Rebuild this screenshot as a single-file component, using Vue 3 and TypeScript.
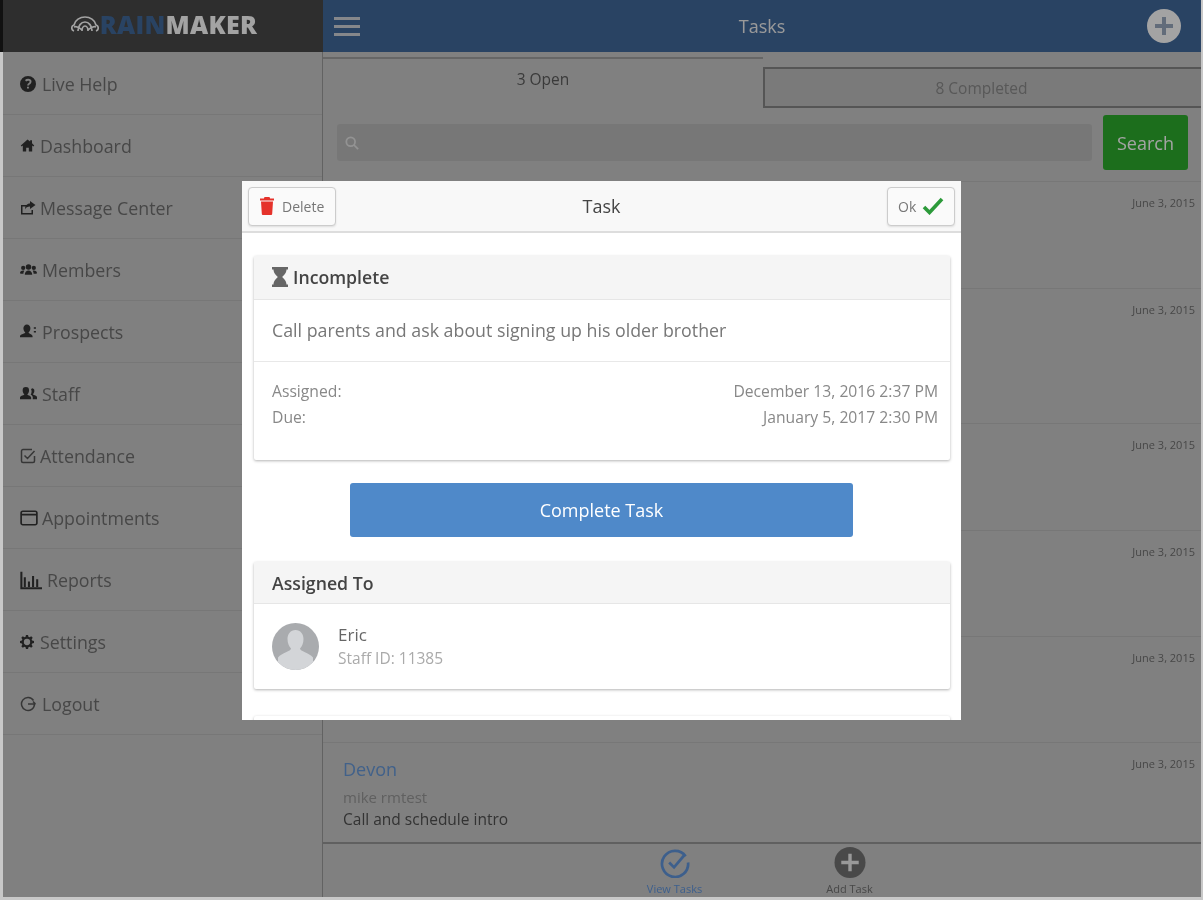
<script setup lang="ts">
interface NavItem { label: string; w: number; size?: number; path: string; stroke?: boolean; soft?: boolean }
const nav: NavItem[] = [
  { label: 'Live Help', w: 22, path: 'M8 0a8 8 0 1 0 0 16A8 8 0 0 0 8 0zm.9 12.6H7v-1.900h1.900zm1.700-4.900c-.8.6-1.500 1-1.600 1.900H7.200c0-1.500.8-2.200 1.500-2.700.5-.4.9-.7.9-1.200 0-.6-.6-1-1.400-1-.8 0-1.500.3-2.100.8L5 3.900c.8-.7 1.900-1.100 3.200-1.100 1.900 0 3.300 1 3.300 2.700 0 1-.4 1.600-.9 2.200z' },
  { label: 'Dashboard', w: 20, size: 15, path: 'M8 1.500 0.800 8l1 1.100L3 8v6.500h3.600v-4h2.800v4H13V8l1.200 1.100 1-1.100L12.800 5.500V2.500h-2v1.200z' },
  { label: 'Message Center', w: 20, path: 'M1 5h6v1.500H2.500v6.500h9v-3H13v4.500H1zM10 1l5.500 4L10 9V6.500c-2.500 0-4 .8-5 3 0-3.500 1.800-6 5-6z' },
  { label: 'Members', w: 22, size: 17, path: 'M8 3a2.600 2.600 0 1 1 0 5.200A2.600 2.600 0 0 1 8 3zM3 4.500a2 2 0 1 1 0 4 2 2 0 0 1 0-4zm10 0a2 2 0 1 1 0 4 2 2 0 0 1 0-4zM4.500 13c0-2.500 1.500-4 3.500-4s3.500 1.500 3.500 4zM0 11.500c0-1.500 1.200-2.500 3-2.500.4 0 .8.100 1 .2C3.400 10 3.200 11 3.200 12H0.800zM16 11.500c0-1.500-1.200-2.500-3-2.500-.4 0-.8.100-1 .2.600.8.800 1.800.8 2.800h2.400z' },
  { label: 'Prospects', w: 22, size: 17, path: 'M6.500 1.500a3.300 3.300 0 0 1 3.300 3.500c0 1.700-.8 3.200-1.800 4 0 1 3.200 1.400 3.800 3.200v1.300H0v-1.300C.6 10.400 5 10 5 9 4 8.200 3.200 6.700 3.200 5a3.300 3.300 0 0 1 3.300-3.500zM13 4h2v1.500h-2zM13 7.500h2V9h-2z' },
  { label: 'Staff', w: 22, size: 17, path: 'M5.500 2a3 3 0 0 1 3 3.200c0 1.500-.7 2.900-1.600 3.600 0 .9 3.100 1.200 3.600 2.900V13.500H0v-1.800c.5-1.700 4.100-2 4.100-2.900C3.200 8.100 2.500 6.700 2.500 5.200A3 3 0 0 1 5.500 2zM11 3a2.500 2.500 0 0 1 2.500 2.700c0 1.300-.6 2.400-1.300 3 0 .7 3.300 1 3.800 2.500v2.300h-4v-2.300c-.3-1-1.200-1.600-2-2 .6-1 .9-2 .9-3.100 0-.8-.2-1.500-.5-2.100.4-.6 1-1 1.600-1z' },
  { label: 'Attendance', w: 20, stroke: true, soft: true, path: 'M14.500 8v5A1.500 1.500 0 0 1 13 14.500H3A1.500 1.500 0 0 1 1.500 13V3A1.500 1.500 0 0 1 3 1.500h9M4.500 7.500 7.500 10.500 14.500 3' },
  { label: 'Appointments', w: 22, size: 18, stroke: true, path: 'M2.500 2h11A1.500 1.500 0 0 1 15 3.500v9a1.500 1.500 0 0 1-1.500 1.500h-11A1.500 1.500 0 0 1 1 12.500v-9A1.500 1.500 0 0 1 2.500 2zM1 5h14' },
  { label: 'Reports', w: 27, size: 22, stroke: true, path: 'M1 2v12h15M3.500 13V6M6.500 13V9M9.500 13V5M12.500 13V7.500' },
  { label: 'Settings', w: 20, size: 14, path: 'M6.800 0h2.400l.4 2.100 1.400.6 1.800-1.200 1.700 1.700-1.200 1.800.6 1.400 2.100.4v2.400l-2.100.4-.6 1.400 1.200 1.800-1.700 1.700-1.800-1.200-1.400.6-.4 2.100H6.800l-.4-2.100-1.400-.6-1.800 1.200-1.700-1.700 1.200-1.800-.6-1.400L0 9.200V6.800l2.100-.4.6-1.400-1.200-1.800 1.700-1.700 1.800 1.200 1.400-.6zM8 4.400a3.600 3.600 0 1 0 0 7.200 3.600 3.600 0 0 0 0-7.200z' },
  { label: 'Logout', w: 22, stroke: true, soft: true, path: 'M13.500 4.500A6.500 6.500 0 1 0 14.500 8M8 8h7.500M13 5.500 15.500 8' },
]
const dates: string[] = Array.from({ length: 6 }, () => 'June 3, 2015')
</script>

<template>
  <div class="frame">
    <div class="brand">
      <svg class="cloud" viewBox="0 0 28 18" width="28" height="18" fill="none" stroke="#fff" stroke-width="1.700">
        <path d="M3 16c-3-1-3-5 0-6 1-5 6-8 11-8s10 3 11 8c3 1 3 5 0 6" />
        <path d="M7 16c0-5 3-9 7-9s7 4 7 9M11 16c0-2 1-5 3-5s3 3 3 5M3 12c3-1 5 0 8 3M25 12c-3-1-5 0-8 3" />
      </svg>
      <span class="logo"><span class="rain">RAIN</span><span class="maker">MAKER</span></span>
    </div>
    <header class="topbar">
      <div class="burger"><i></i><i></i><i></i></div>
      <h1 class="title">Tasks</h1>
      <svg class="addtop" viewBox="0 0 34 34" width="34" height="34">
        <circle cx="17" cy="17" r="17" fill="#fff" />
        <path d="M17 8v18M8 17h18" stroke="#99aabf" stroke-width="4" />
      </svg>
    </header>

    <aside class="side">
      <div v-for="item in nav" :key="item.label" class="navrow">
        <span class="navicon" :style="{ width: item.w + 'px' }">
          <svg viewBox="0 0 16 16" :width="item.size ?? 16" :height="item.size ?? 16" :fill="item.stroke ? 'none' : '#353535'" :stroke="item.stroke ? (item.soft ? '#555' : '#353535') : 'none'" :stroke-width="item.stroke ? 1.500 : 0">
            <path :d="item.path" />
          </svg>
        </span>
        <span>{{ item.label }}</span>
      </div>
    </aside>

    <main class="main">
      <div class="tabs">
        <div class="tab open">3 Open</div>
        <div class="tab closed">8 Completed</div>
      </div>
      <div class="searchrow">
        <div class="searchbox">
          <svg viewBox="0 0 16 16" width="14" height="14" fill="none" stroke="#e6e6e6" stroke-width="2"><circle cx="6.500" cy="6.500" r="5" /><path d="m10 10 5 5" /></svg>
        </div>
        <button class="searchbtn">Search</button>
      </div>
      <div class="list">
        <div v-for="(d, i) in dates" :key="i" class="row">
          <div class="rowmain">
            <template v-if="i === 5">
              <div class="rname">Devon</div>
              <div class="rsub">mike rmtest</div>
              <div class="rnote">Call and schedule intro</div>
            </template>
          </div>
          <div class="rdate">{{ d }}</div>
        </div>
      </div>
      <nav class="bottombar">
        <div class="btab active">
          <svg viewBox="0 0 32 32" width="32" height="32" fill="none" stroke="#6095dc" stroke-width="2.800">
            <path d="M27 9.500A13.500 13.500 0 1 0 29.500 16" />
            <path d="m10 16 5 5 11-13" />
          </svg>
          <span>View Tasks</span>
        </div>
        <div class="btab">
          <svg viewBox="0 0 32 32" width="32" height="32">
            <circle cx="16" cy="16" r="16" fill="#737373" />
            <path d="M16 7v18M7 16h18" stroke="#f0f0f0" stroke-width="3.500" />
          </svg>
          <span>Add Task</span>
        </div>
      </nav>
    </main>

    <div class="dim"></div>
    <div class="layer">
      <section class="modal">
        <div class="mhead">
          <button class="mbtn del">
            <svg viewBox="0 0 14 18" width="14" height="18" fill="#e5322b">
              <path d="M4.500 0h5l.6 1.500H14v2H0v-2h3.900zM1 4.500h12l-.8 12.200c0 .7-.6 1.300-1.300 1.300H3.100c-.7 0-1.300-.6-1.300-1.300z" />
            </svg>
            <span>Delete</span>
          </button>
          <div class="mtitle">Task</div>
          <button class="mbtn ok">
            <span>Ok</span>
            <svg viewBox="0 0 22 18" width="22" height="18" fill="none" stroke="#2c9a3a" stroke-width="3.600"><path d="m2 10 5.500 5.500L20 2" /></svg>
          </button>
        </div>
        <div class="mbody">
          <div class="card">
            <div class="chead">
              <svg viewBox="0 0 16 20" width="16" height="20" fill="#666"><path d="M0 0h16v2.500h-1.500c0 3.500-2.500 5.500-4.300 7.500 1.800 2 4.300 4 4.300 7.500H16V20H0v-2.500h1.500c0-3.500 2.500-5.500 4.300-7.500C4 8 1.500 6 1.500 2.500H0z" /></svg>
              <span>Incomplete</span>
            </div>
            <div class="desc">Call parents and ask about signing up his older brother</div>
            <div class="meta">
              <div class="metarow"><span>Assigned:</span><span>December 13, 2016 2:37 PM</span></div>
              <div class="metarow"><span>Due:</span><span>January 5, 2017 2:30 PM</span></div>
            </div>
          </div>
          <button class="complete">Complete Task</button>
          <div class="card second">
            <div class="chead plain">Assigned To</div>
            <div class="person">
              <svg class="avatar" viewBox="0 0 47 47" width="47" height="47">
                <defs><clipPath id="avatar-clip"><circle cx="23.500" cy="23.500" r="23.500" /></clipPath></defs>
                <circle cx="23.500" cy="23.500" r="23.500" fill="#a9abae" />
                <path clip-path="url(#avatar-clip)" d="M23.500 7c5 0 8 4 8 9 0 4-1.500 7.500-3.500 9.500 0 3 9 4 13 9v13H6v-13c4-5 13-6 13-9-2-2-3.500-5.500-3.500-9.500 0-5 3-9 8-9z" fill="#d3d5d8" />
              </svg>
              <div>
                <div class="pname">Eric</div>
                <div class="pid">Staff ID: 11385</div>
              </div>
            </div>
          </div>
          <div class="card stub"></div>
        </div>
      </section>
    </div>
  </div>
</template>

<style>
html, body { margin: 0; padding: 0; }
</style>

<style scoped>
.frame {
  position: relative;
  width: 1203px;
  height: 900px;
  box-sizing: border-box;
  padding: 0 2px 3px 3px;
  display: grid;
  grid-template-columns: 320px 1fr;
  grid-template-rows: 52px 1fr;
  background: linear-gradient(#111, #111) no-repeat 0 0 / 3px 52px, #c8c8c8;
  font-family: "Open Sans", "Liberation Sans", sans-serif;
  overflow: hidden;
  filter: blur(0.7px);
}
.brand {
  background: #484848;
  display: flex;
  align-items: center;
  justify-content: center;
  gap: 1px;
  padding: 0 0 5px 2px;
}
.logo { font-size: 25px; font-weight: 800; letter-spacing: 0.3px; }
.rain { color: #40699c; }
.maker { color: #fff; }
.topbar {
  background: #40699c;
  display: flex;
  align-items: center;
  justify-content: space-between;
  padding: 0 20px 0 11px;
  position: relative;
}
.burger { display: flex; flex-direction: column; gap: 5px; width: 26px; }
.burger i { height: 3px; background: #d0d4da; display: block; }
.title {
  position: absolute;
  left: 0;
  right: 0;
  text-align: center;
  margin: 0;
  font-size: 18px;
  font-weight: 500;
  color: #f0f0f0;
  pointer-events: none;
}
.side {
  background: #c8c8c8;
  border-right: 1px solid #999;
  display: flex;
  flex-direction: column;
  padding-top: 1px;
}
.navrow {
  height: 62px;
  box-sizing: border-box;
  display: flex;
  align-items: center;
  padding-left: 17px;
  font-size: 17.8px;
  color: #707070;
  border-bottom: 1px solid #bbb;
}
.navicon { display: inline-flex; flex: none; }
.main {
  background: #c8c8c8;
  display: flex;
  flex-direction: column;
  min-height: 0;
}
.tabs { display: flex; padding-top: 5px; height: 51px; }
.tab {
  flex: 1;
  display: flex;
  justify-content: center;
  font-size: 15.500px;
}
.tab.open { border-top: 2px solid #a0a0a0; color: #5c5c5c; padding-top: 9px; flex: 0 0 440px; box-sizing: border-box; }
.tab.closed {
  margin-top: 10px;
  border: 2px solid #858585;
  border-right: 0;
  background: #bfbfbf;
  color: #8a8a8a;
  padding: 8px 3px 0 0;
}
.searchrow {
  height: 74px;
  box-sizing: border-box;
  display: flex;
  align-items: center;
  gap: 11px;
  padding: 0 13px 4px 14px;
  border-bottom: 1px solid #bbb;
}
.searchbox {
  flex: 1;
  height: 37px;
  background: #bbb;
  display: flex;
  align-items: center;
  padding-left: 8px;
  border-radius: 3px;
}
.searchbtn {
  width: 85px;
  height: 55px;
  border: 0;
  border-radius: 3px;
  background: #2cad2c;
  color: #fff;
  font: inherit;
  font-size: 18px;
}
.list {
  flex: 1;
  display: grid;
  grid-template-rows: 107px 135px 107px 106px 106px 1fr;
  min-height: 0;
}
.row {
  display: flex;
  justify-content: space-between;
  padding: 13px 6px 0 20px;
  border-bottom: 1px solid #bbb;
}
.row:last-child { border-bottom: 0; }
.rdate { font-size: 11px; color: #707070; }
.rname { color: #6698d8; font-size: 18px; line-height: 26px; }
.rsub { color: #969696; font-size: 15px; line-height: 22px; margin-top: 4px; }
.rnote { color: #505050; font-size: 15.500px; line-height: 23px; }
.bottombar {
  height: 55px;
  flex: none;
  box-sizing: border-box;
  border-top: 2px solid #969696;
  display: flex;
  justify-content: center;
  overflow: hidden;
}
.btab {
  width: 175px;
  display: flex;
  flex-direction: column;
  align-items: center;
  padding-top: 3px;
  font-size: 11px;
  color: #707070;
  line-height: 16px;
  gap: 3px;
}
.btab.active { color: #6095dc; }

.dim {
  position: absolute;
  top: 0;
  right: 2px;
  bottom: 3px;
  left: 3px;
  background: rgba(0, 0, 0, 0.36);
}
.layer {
  position: absolute;
  inset: 0;
  display: flex;
  align-items: center;
  justify-content: center;
}
.modal {
  width: 719px;
  height: 539px;
  background: #fff;
  overflow: hidden;
  display: flex;
  flex-direction: column;
}
.mhead {
  height: 52px;
  flex: none;
  box-sizing: border-box;
  background: #f8f8f8;
  border-bottom: 2px solid #ddd;
  display: flex;
  align-items: center;
  justify-content: space-between;
  padding: 1px 6px 0;
  position: relative;
}
.mtitle {
  position: absolute;
  left: 0;
  right: 0;
  text-align: center;
  font-size: 18px;
  font-weight: 500;
  color: #444;
}
.mbtn {
  position: relative;
  z-index: 1;
  height: 39px;
  background: #fafafa;
  border: 1px solid #ccc;
  border-radius: 4px;
  box-shadow: 0 1px 2px #ddd;
  display: flex;
  align-items: center;
  font: inherit;
  color: #777;
  font-size: 14px;
}
.mbtn.del { width: 88px; padding: 0 0 0 11px; gap: 8px; }
.mbtn.ok { width: 68px; padding: 0 0 0 10px; gap: 6px; }
.mbody {
  padding: 23px 11px 0 12px;
  display: flex;
  flex-direction: column;
  align-items: stretch;
}
.card {
  background: #fff;
  box-shadow: 0 1px 3px rgba(0, 0, 0, 0.3);
  border-radius: 2px;
  flex: none;
}
.chead {
  height: 44px;
  box-sizing: border-box;
  background: #f5f5f5;
  border-bottom: 1px solid #e6e6e6;
  display: flex;
  align-items: center;
  padding-left: 18px;
  gap: 5px;
  font-size: 17.700px;
  font-weight: 600;
  color: #444;
}
.desc {
  height: 62px;
  box-sizing: border-box;
  display: flex;
  align-items: center;
  padding-left: 18px;
  font-size: 17.800px;
  color: #777;
  border-bottom: 1px solid #e8e8e8;
}
.meta { height: 98px; box-sizing: border-box; padding: 16px 12px 0 18px; font-size: 15.700px; color: #888; }
.metarow { display: flex; justify-content: space-between; line-height: 26px; }
.complete {
  margin: 23px 0 0 96px;
  width: 503px;
  height: 54px;
  border: 0;
  border-radius: 3px;
  background: #4f89c9;
  color: #fff;
  font: inherit;
  font-size: 18px;
  flex: none;
}
.second { margin-top: 25px; }
.chead.plain { height: 42px; padding-top: 1px; }
.person {
  height: 85px;
  display: flex;
  align-items: center;
  gap: 19px;
  padding-left: 18px;
}
.pname { font-size: 17px; color: #666; line-height: 23px; }
.pid { font-size: 15.500px; color: #aaa; line-height: 23px; margin-top: 1px; }
.stub { margin-top: 27px; height: 30px; }
</style>
